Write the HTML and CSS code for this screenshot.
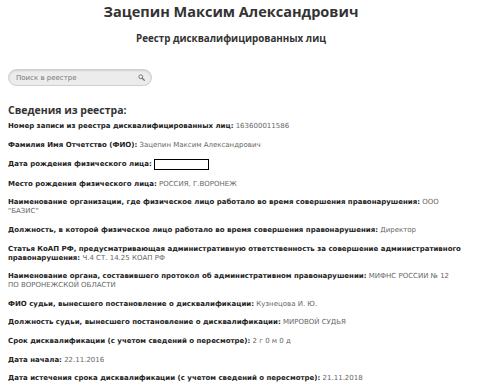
FILE: index.html
```html
<!DOCTYPE html>
<html lang="ru">
<head>
    <meta charset="UTF-8">
    <title>Зацепин Максим Александрович</title>
    <link rel="stylesheet" href="styles.css">
</head>
<body>

    <!-- Header -->
    <div class="header">
        <h1>Зацепин Максим Александрович</h1>
        <h2>Реестр дисквалифицированных лиц</h2>
    </div>

    <!-- Search -->
    <div class="search">
        <input type="text" placeholder="Поиск в реестре">
        <svg class="search-icon" width="7" height="7" viewBox="0 0 10 10">
            <circle cx="4" cy="4" r="2.8" fill="none" stroke="#777" stroke-width="1.4"/>
            <line x1="6" y1="6" x2="9" y2="9" stroke="#777" stroke-width="1.8" stroke-linecap="round"/>
        </svg>
    </div>

    <!-- Record -->
    <div class="record">
        <h3>Сведения из реестра:</h3>
        <p><b>Номер записи из реестра дисквалифицированных лиц:</b> 163600011586</p>
        <p><b>Фамилия Имя Отчетство (ФИО):</b> Зацепин Максим Александрович</p>
        <p><b>Дата рождения физического лица:</b> <span class="hidden-box"></span></p>
        <p><b>Место рождения физического лица:</b> РОССИЯ, Г.ВОРОНЕЖ</p>
        <p><b>Наименование организации, где физическое лицо работало во время совершения правонарушения:</b> ООО "БАЗИС"</p>
        <p><b>Должность, в которой физическое лицо работало во время совершения правонарушения:</b> Директор</p>
        <p><b>Статья КоАП РФ, предусматривающая административную ответственность за совершение административного правонарушения:</b> Ч.4 СТ. 14.25 КОАП РФ</p>
        <p><b>Наименование органа, составившего протокол об административном правонарушении:</b> МИФНС РОССИИ № 12 ПО&nbsp;ВОРОНЕЖСКОЙ ОБЛАСТИ</p>
        <p><b>ФИО судьи, вынесшего постановление о дисквалификации:</b> Кузнецова И. Ю.</p>
        <p><b>Должность судьи, вынесшего постановление о дисквалификации:</b> МИРОВОЙ СУДЬЯ</p>
        <p><b>Срок дисквалификации (с учетом сведений о пересмотре):</b> 2 г 0 м 0 д</p>
        <p><b>Дата начала:</b> 22.11.2016</p>
        <p><b>Дата истечения срока дисквалификации (с учетом сведений о пересмотре):</b> 21.11.2018</p>
    </div>

</body>
</html>
```

FILE: styles.css
```css
body {
    margin: 0;
    padding: 0 18px 0 8px;
    background-color: #fff;
    font-family: "DejaVu Sans", Verdana, sans-serif;
    color: #666;
}

.header {
    text-align: center;
    color: #333;
    padding-right: 12px;
}

.header h1 {
    margin: 0;
    padding-top: 3px;
    font-family: "Open Sans", sans-serif;
    font-size: 14.5px;
    line-height: 18px;
    font-weight: bold;
}

.header h2 {
    margin: 0;
    padding-top: 11px;
    font-family: "Open Sans", sans-serif;
    font-size: 9.8px;
    line-height: 14px;
    font-weight: bold;
}

.search {
    position: relative;
    width: 144px;
    margin-top: 23px;
}

.search input {
    display: block;
    box-sizing: border-box;
    width: 144px;
    height: 17px;
    padding: 0 16px 0 7px;
    border: 1px solid #cfcfcf;
    border-radius: 9px;
    background-color: #ececec;
    box-shadow: inset 0 1px 2px rgba(0, 0, 0, 0.12);
    font-family: "DejaVu Sans", sans-serif;
    font-size: 7px;
    outline: none;
}

.search input::placeholder {
    color: #777;
}

.search-icon {
    position: absolute;
    right: 7px;
    top: 5px;
}

.record h3 {
    margin: 17px 0 5px;
    font-family: "Open Sans", sans-serif;
    font-size: 10.5px;
    line-height: 14px;
    font-weight: bold;
    color: #333;
}

.record p {
    margin: 0 0 9.6px;
    font-size: 7px;
    line-height: 9px;
}

.record b {
    color: #222;
}

.hidden-box {
    display: inline-block;
    box-sizing: border-box;
    width: 55px;
    height: 11px;
    border: 1px solid #000;
    vertical-align: middle;
    background: #fff;
}
```
